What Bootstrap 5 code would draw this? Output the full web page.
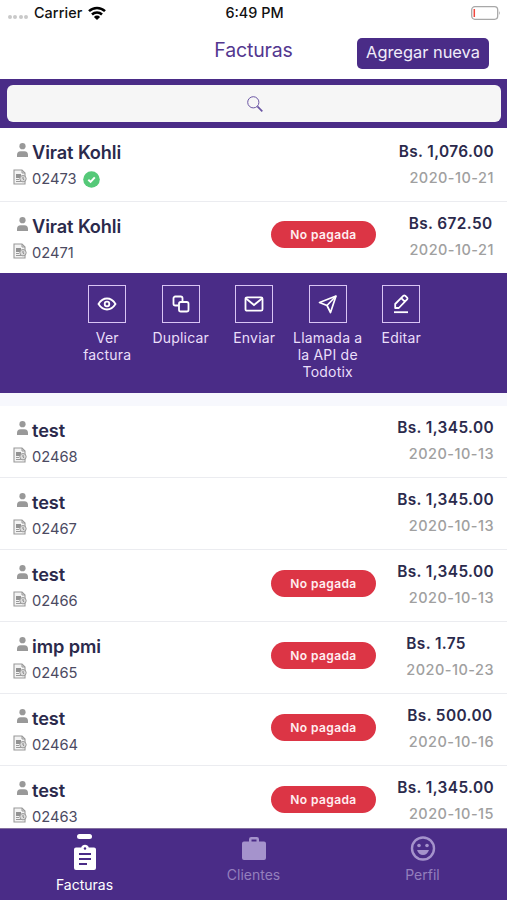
<!DOCTYPE html>
<html lang="es">
<head>
<meta charset="utf-8">
<meta name="viewport" content="width=device-width, initial-scale=1">
<title>Facturas</title>
<link href="https://cdn.jsdelivr.net/npm/bootstrap@5.3.0/dist/css/bootstrap.min.css" rel="stylesheet">
<style>
:root{--brand:#4a2c87;--ink:#2b2a4c}
body{font-family:Inter,"Liberation Sans",sans-serif;height:900px;overflow:hidden;background:#fff;color:var(--ink)}
svg{display:block;flex:none}
.brand-bg{background:var(--brand)}
.status{height:26px;font-size:14.4px;font-weight:500;color:#111;padding:0 6px 0 8px}
.status>div{flex:1 1 0}
.signal{gap:1.300px}
.signal i{width:4px;height:4px;border-radius:50%;background:#c9c9c9}
.carrier{margin-left:6px;letter-spacing:.1px}
.wifi{margin-left:6px}
.page-head{height:53px}
.page-side{flex:1 1 0;min-width:0}
.page-head h1{font-size:19.5px;font-weight:400;color:#53378f;letter-spacing:-.15px;line-height:49px}
.btn-new{background:var(--brand);color:#f1ecfa;font-size:16.4px;line-height:21px;width:132px;height:31px;border-radius:5px;padding:4px 0 6px;white-space:nowrap;margin:12px 18px 0 0;letter-spacing:0}
.btn-new:hover{background:#5a3b99;color:#fff}
.search-band{height:49px;padding:6px 6px 6px 7px}
.search-field{height:37px;background:#f6f6f6;border-radius:6px;padding-left:2px}
.invoice{height:72px;border-bottom:1px solid #ebecf0;padding:12px 13px 0 13px}
.invoice.first{height:74px}
.invoice.second{height:71px;border:0}
.invoice.last{height:62px;border:0}
.who{height:24px;font-size:18.2px;font-weight:600;line-height:24px;letter-spacing:-.1px}
.who svg{margin:3px 4px 0 4px}
.num{height:22px;margin-top:4px;font-size:14.700px;line-height:23px;color:#4b4a62}
.num>svg:first-child{margin:1px 5px 0 0}
.paid{margin:3px 0 0 4px}
.state{width:105px;height:27px;border-radius:14px;background:#dc3545;color:#ffeef0;font-size:12px;font-weight:600;line-height:27px;letter-spacing:.4px;margin-top:8px}
.second .state{margin-top:7px}
.totals{width:118px;margin-top:-2px}
.first .totals{margin-top:0}
.amount{font-size:15.4px;font-weight:600;line-height:24px;letter-spacing:.38px}
.amount.inset{margin-right:1.500px}
.date{font-size:14.500px;font-weight:500;line-height:24px;margin-top:2px;color:#a0a0a0;letter-spacing:.47px}
.actions{height:120px;padding:12px 69px 0 70.500px;color:#eadffa}
.action{width:73.500px;font-size:14px;line-height:17.4px;letter-spacing:.2px}
.frame{width:38px;height:38px;border:1.5px solid #d9c5f4;margin-bottom:5.500px;color:#fff}
.gap-strip{height:13px;background:#f7f8fd}
.tabs{height:72px;border-top:1px solid #83709f}
.tab{flex:1 1 0;color:#947fbd;font-size:14px;line-height:18px;padding-top:7px}
.tab svg{margin-bottom:5px}
.tab.active{color:#fff;padding-top:5px}
.marker{width:15px;height:5px;border-radius:3px;background:#fff;margin-bottom:5px}
</style>
</head>
<body class="d-flex flex-column">
<svg width="0" height="0" class="d-none">
  <symbol id="user" viewBox="0 0 11 14"><circle cx="5.5" cy="3.2" r="3.1" fill="#999"/><path d="M0 14v-2Q0 8.200 3.6 8.200h3.8Q11 8.200 11 12v2z" fill="#999"/></symbol>
  <symbol id="doc" viewBox="0 0 14 16"><path d="M1 1h8l3 3v11H1z" fill="#f3f3f3" stroke="#999" stroke-width="1.1"/><path d="M9 1v3h3" fill="none" stroke="#999"/><path d="M3 5h5v4H3z" fill="#929292"/><path d="M3 10.500h3M3 12.500h5" stroke="#999"/><circle cx="10" cy="9.700" r="3.200" fill="#ddd" stroke="#999"/><path d="M10 8v2l1.200.8" fill="none" stroke="#888"/></symbol>
</svg>

<header class="bg-white">
  <div class="status d-flex align-items-center">
    <div class="d-flex align-items-center">
      <span class="signal d-flex mt-2"><i class="d-block"></i><i class="d-block"></i><i class="d-block"></i><i class="d-block"></i></span>
      <span class="carrier">Carrier</span>
      <svg class="wifi" width="18" height="14" viewBox="0 0 18 14"><g fill="none" stroke="#000" stroke-width="2.500"><path d="M1 5.200a11.500 11.500 0 0 1 16 0"/><path d="M4 8.500a7.200 7.200 0 0 1 10 0"/></g><path d="M9 14 5.900 10.900a4.400 4.400 0 0 1 6.200 0z"/></svg>
    </div>
    <div class="text-center">6:49 PM</div>
    <div class="d-flex justify-content-end"><svg width="30" height="14" viewBox="0 0 30 14"><rect x=".7" y=".7" width="26" height="12.600" rx="3.200" fill="#fff" stroke="#a8a8a8" stroke-width="1.300"/><path d="M3.300 3v8" stroke="#f0473e" stroke-width="1.500"/><path d="M28.200 5q1.500 2 0 4z" fill="#999"/></svg></div>
  </div>
  <div class="page-head d-flex">
    <div class="page-side"></div>
    <h1 class="m-0 text-center">Facturas</h1>
    <div class="page-side d-flex justify-content-end"><button class="btn btn-new border-0" type="button">Agregar nueva</button></div>
  </div>
</header>

<div class="search-band brand-bg">
  <div class="search-field d-flex align-items-center justify-content-center">
    <svg width="16" height="16" viewBox="0 0 16 16" fill="none" stroke="#6b56a4"><circle cx="6.300" cy="6.300" r="5.600" stroke-width="1"/><path d="m10.400 10.400 4.900 4.900" stroke-width="1.700"/></svg>
  </div>
</div>

<main class="flex-grow-1">
  <article class="invoice first d-flex">
    <div class="flex-grow-1"><div class="who d-flex"><svg width="11" height="14"><use href="#user"/></svg><span>Virat Kohli</span></div>
      <div class="num d-flex"><svg width="14" height="16"><use href="#doc"/></svg><span>02473</span><svg class="paid" width="19" height="17" viewBox="0 0 19 17"><circle cx="10.500" cy="8.500" r="8.300" fill="#55c978"/><path d="m7.300 8.700 2.300 2.200 4.200-4.500" fill="none" stroke="#fff" stroke-width="2"/></svg></div></div>
    <div class="totals text-end"><div class="amount">Bs. 1,076.00</div><div class="date">2020-10-21</div></div>
  </article>
  <article class="invoice second d-flex">
    <div class="flex-grow-1"><div class="who d-flex"><svg width="11" height="14"><use href="#user"/></svg><span>Virat Kohli</span></div>
      <div class="num d-flex"><svg width="14" height="16"><use href="#doc"/></svg><span>02471</span></div></div>
    <div class="state text-center">No pagada</div>
    <div class="totals text-end"><div class="amount inset">Bs. 672.50</div><div class="date">2020-10-21</div></div>
  </article>
  <nav class="actions brand-bg d-flex text-center">
    <div class="action d-flex flex-column align-items-center"><span class="frame d-flex align-items-center justify-content-center"><svg width="20" height="20" viewBox="0 0 20 20" fill="none" stroke="currentColor" stroke-width="1.800"><path d="M1.500 10Q5 4.500 10 4.500T18.500 10Q15 15.500 10 15.500T1.500 10z"/><circle cx="10" cy="10" r="2.300"/></svg></span>Ver<br>factura</div>
    <div class="action d-flex flex-column align-items-center"><span class="frame d-flex align-items-center justify-content-center"><svg width="18" height="18" viewBox="0 0 18 18" fill="none" stroke="currentColor" stroke-width="1.800"><path d="M6.500 10.500H3.300A1.800 1.800 0 0 1 1.500 8.700V3.300a1.800 1.800 0 0 1 1.800-1.800h5.400a1.800 1.800 0 0 1 1.800 1.800v3"/><rect x="7" y="7" width="9.500" height="9.500" rx="1.800"/></svg></span>Duplicar</div>
    <div class="action d-flex flex-column align-items-center"><span class="frame d-flex align-items-center justify-content-center"><svg width="20" height="16" viewBox="0 0 20 16" fill="none" stroke="currentColor" stroke-width="1.800"><rect x="1.500" y="1.300" width="17" height="13.400" rx="1.500"/><path d="m2 2.500 8 6.500 8-6.500"/></svg></span>Enviar</div>
    <div class="action d-flex flex-column align-items-center"><span class="frame d-flex align-items-center justify-content-center"><svg width="20" height="20" viewBox="0 0 20 20" fill="none" stroke="currentColor" stroke-width="1.700" stroke-linejoin="round"><path d="M18 2 1.500 8.500l7.500 3L12.500 18.500z"/><path d="m18 2-9 9.500"/></svg></span><span class="text-nowrap">Llamada a<br>la API de<br>Todotix</span></div>
    <div class="action d-flex flex-column align-items-center"><span class="frame d-flex align-items-center justify-content-center"><svg width="18" height="20" viewBox="0 0 18 20" fill="none" stroke="currentColor" stroke-width="1.800" stroke-linejoin="round"><path d="M3.200 14v-4L11.500 1.700q.8-.6 1.600 0l2 2q.7.800 0 1.600L6.800 14zM9.300 4.200l3.500 3.500"/><path d="M2 18.200h14"/></svg></span>Editar</div>
  </nav>
  <div class="gap-strip"></div>
  <article class="invoice d-flex">
    <div class="flex-grow-1"><div class="who d-flex"><svg width="11" height="14"><use href="#user"/></svg><span>test</span></div><div class="num d-flex"><svg width="14" height="16"><use href="#doc"/></svg><span>02468</span></div></div>
    <div class="totals text-end"><div class="amount">Bs. 1,345.00</div><div class="date">2020-10-13</div></div>
  </article>
  <article class="invoice d-flex">
    <div class="flex-grow-1"><div class="who d-flex"><svg width="11" height="14"><use href="#user"/></svg><span>test</span></div><div class="num d-flex"><svg width="14" height="16"><use href="#doc"/></svg><span>02467</span></div></div>
    <div class="totals text-end"><div class="amount">Bs. 1,345.00</div><div class="date">2020-10-13</div></div>
  </article>
  <article class="invoice d-flex">
    <div class="flex-grow-1"><div class="who d-flex"><svg width="11" height="14"><use href="#user"/></svg><span>test</span></div><div class="num d-flex"><svg width="14" height="16"><use href="#doc"/></svg><span>02466</span></div></div>
    <div class="state text-center">No pagada</div>
    <div class="totals text-end"><div class="amount">Bs. 1,345.00</div><div class="date">2020-10-13</div></div>
  </article>
  <article class="invoice d-flex">
    <div class="flex-grow-1"><div class="who d-flex"><svg width="11" height="14"><use href="#user"/></svg><span>imp pmi</span></div><div class="num d-flex"><svg width="14" height="16"><use href="#doc"/></svg><span>02465</span></div></div>
    <div class="state text-center">No pagada</div>
    <div class="totals d-flex flex-column align-items-end"><div class="text-start"><div class="amount">Bs. 1.75</div><div class="date">2020-10-23</div></div></div>
  </article>
  <article class="invoice d-flex">
    <div class="flex-grow-1"><div class="who d-flex"><svg width="11" height="14"><use href="#user"/></svg><span>test</span></div><div class="num d-flex"><svg width="14" height="16"><use href="#doc"/></svg><span>02464</span></div></div>
    <div class="state text-center">No pagada</div>
    <div class="totals text-end"><div class="amount inset">Bs. 500.00</div><div class="date">2020-10-16</div></div>
  </article>
  <article class="invoice last d-flex">
    <div class="flex-grow-1"><div class="who d-flex"><svg width="11" height="14"><use href="#user"/></svg><span>test</span></div><div class="num d-flex"><svg width="14" height="16"><use href="#doc"/></svg><span>02463</span></div></div>
    <div class="state text-center">No pagada</div>
    <div class="totals text-end"><div class="amount">Bs. 1,345.00</div><div class="date">2020-10-15</div></div>
  </article>
</main>

<footer class="tabs brand-bg d-flex">
  <div class="tab active d-flex flex-column align-items-center"><span class="marker"></span><svg width="24" height="27" viewBox="0 0 24 27"><path fill="#fff" d="M3 3.500h5.200a4 4 0 0 1 7.600 0H21a2 2 0 0 1 2 2V24a2 2 0 0 1-2 2H3a2 2 0 0 1-2-2V5.500a2 2 0 0 1 2-2z"/><circle cx="12" cy="4.500" r="1.200" fill="#4a2c87"/><path d="M6 10h12M6 15h12M6 20h8" stroke="#4a2c87" stroke-width="2.200"/></svg>Facturas</div>
  <div class="tab d-flex flex-column align-items-center"><svg width="26" height="25" viewBox="0 0 26 25"><path fill="#a593cc" fill-rule="evenodd" d="M8 5.500V3.200A2.200 2.200 0 0 1 10.200 1h5.600A2.200 2.200 0 0 1 18 3.200v2.300h5a2 2 0 0 1 2 2V22a2 2 0 0 1-2 2H3a2 2 0 0 1-2-2V7.500a2 2 0 0 1 2-2zm2.500 0h5v-2h-5z"/></svg>Clientes</div>
  <div class="tab d-flex flex-column align-items-center"><svg width="26" height="25" viewBox="0 0 26 25"><circle cx="13" cy="12.500" r="11" fill="none" stroke="#a593cc" stroke-width="2.400"/><circle cx="9" cy="9.500" r="1.800" fill="#a593cc"/><circle cx="17" cy="9.500" r="1.800" fill="#a593cc"/><path d="M7 14h12q-1.800 5-6 5t-6-5z" fill="#a593cc"/></svg>Perfil</div>
</footer>
<script src="https://cdn.jsdelivr.net/npm/bootstrap@5.3.0/dist/js/bootstrap.bundle.min.js"></script>
</body>
</html>
